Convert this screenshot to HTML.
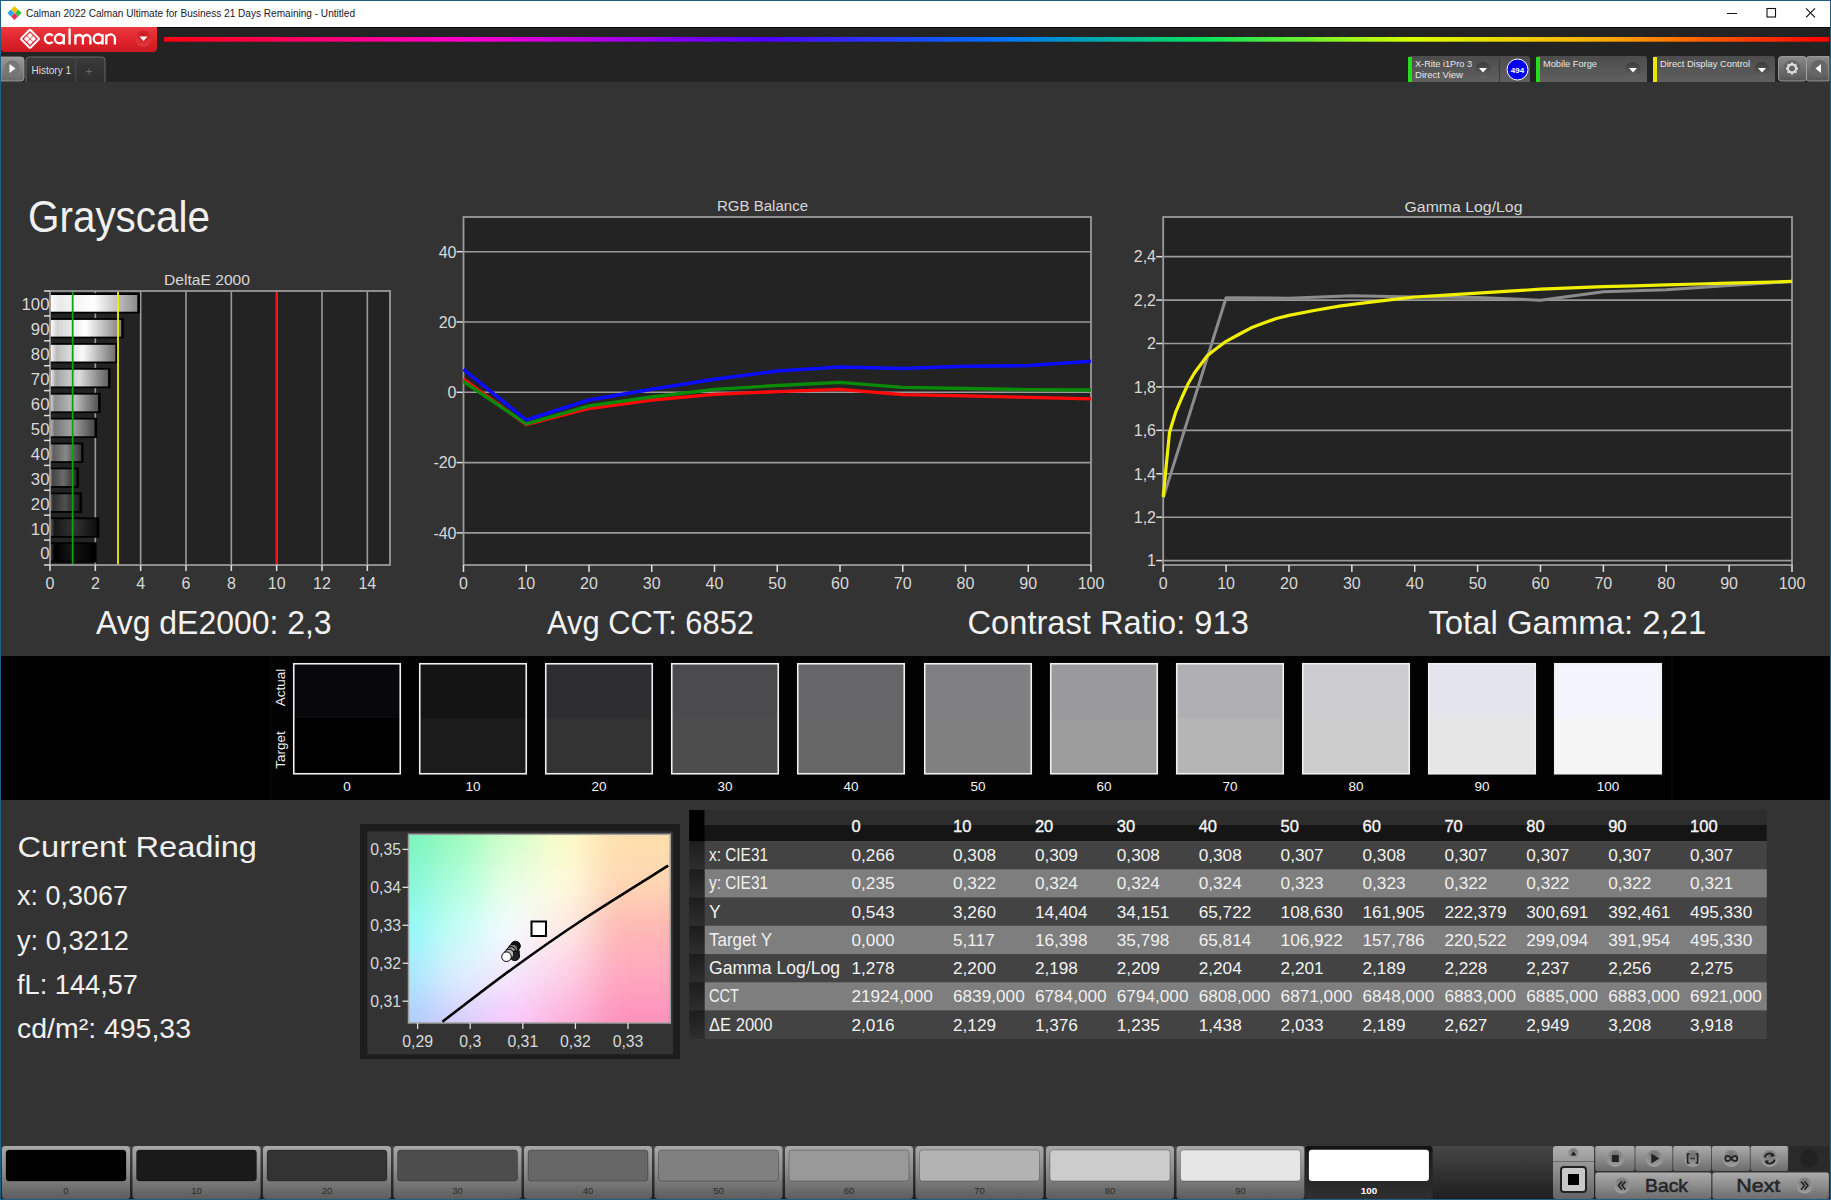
<!DOCTYPE html>
<html><head><meta charset="utf-8"><title>Calman Grayscale</title>
<style>html,body{margin:0;padding:0;background:#333;overflow:hidden;width:1831px;height:1200px}svg{display:block}</style>
</head><body><svg width="1831" height="1200" viewBox="0 0 1831 1200" font-family='"Liberation Sans", sans-serif'><defs><linearGradient id="redg" x1="0" y1="0" x2="0" y2="1"><stop offset="0" stop-color="#ec3a40"/><stop offset="0.5" stop-color="#e0242c"/><stop offset="1" stop-color="#cc1a20"/></linearGradient><radialGradient id="redc" cx="0.5" cy="0.3" r="0.7"><stop offset="0" stop-color="#c8161c"/><stop offset="1" stop-color="#e03a40"/></radialGradient><linearGradient id="rainbow" x1="0" y1="0" x2="1" y2="0"><stop offset="0" stop-color="#ff0010"/><stop offset="0.18" stop-color="#ff00cc"/><stop offset="0.36" stop-color="#5000ff"/><stop offset="0.5" stop-color="#0070ff"/><stop offset="0.62" stop-color="#00e060"/><stop offset="0.75" stop-color="#d8ff00"/><stop offset="0.86" stop-color="#ffb000"/><stop offset="1" stop-color="#ff0000"/></linearGradient><linearGradient id="playg" x1="0" y1="0" x2="0" y2="1"><stop offset="0" stop-color="#9a9a9a"/><stop offset="1" stop-color="#6a6a6a"/></linearGradient><linearGradient id="tabg" x1="0" y1="0" x2="0" y2="1"><stop offset="0" stop-color="#3a3a3a"/><stop offset="1" stop-color="#2e2e2e"/></linearGradient><linearGradient id="combog" x1="0" y1="0" x2="0" y2="1"><stop offset="0" stop-color="#4c4c4c"/><stop offset="1" stop-color="#606060"/></linearGradient><linearGradient id="ddc" x1="0" y1="0" x2="0" y2="1"><stop offset="0" stop-color="#3a3a3a"/><stop offset="1" stop-color="#646464"/></linearGradient><linearGradient id="btng" x1="0" y1="0" x2="0" y2="1"><stop offset="0" stop-color="#8a8a8a"/><stop offset="1" stop-color="#555"/></linearGradient><linearGradient id="bar0" x1="0" y1="0" x2="1" y2="0"><stop offset="0" stop-color="rgb(70,70,70)"/><stop offset="0.1" stop-color="rgb(0,0,0)"/><stop offset="0.5" stop-color="rgb(22,22,22)"/><stop offset="1" stop-color="rgb(0,0,0)"/></linearGradient><linearGradient id="bar1" x1="0" y1="0" x2="1" y2="0"><stop offset="0" stop-color="rgb(96,96,96)"/><stop offset="0.1" stop-color="rgb(23,23,23)"/><stop offset="0.5" stop-color="rgb(51,51,51)"/><stop offset="1" stop-color="rgb(14,14,14)"/></linearGradient><linearGradient id="bar2" x1="0" y1="0" x2="1" y2="0"><stop offset="0" stop-color="rgb(121,121,121)"/><stop offset="0.1" stop-color="rgb(46,46,46)"/><stop offset="0.5" stop-color="rgb(79,79,79)"/><stop offset="1" stop-color="rgb(28,28,28)"/></linearGradient><linearGradient id="bar3" x1="0" y1="0" x2="1" y2="0"><stop offset="0" stop-color="rgb(146,146,146)"/><stop offset="0.1" stop-color="rgb(69,69,69)"/><stop offset="0.5" stop-color="rgb(107,107,107)"/><stop offset="1" stop-color="rgb(41,41,41)"/></linearGradient><linearGradient id="bar4" x1="0" y1="0" x2="1" y2="0"><stop offset="0" stop-color="rgb(172,172,172)"/><stop offset="0.1" stop-color="rgb(93,93,93)"/><stop offset="0.5" stop-color="rgb(136,136,136)"/><stop offset="1" stop-color="rgb(56,56,56)"/></linearGradient><linearGradient id="bar5" x1="0" y1="0" x2="1" y2="0"><stop offset="0" stop-color="rgb(198,198,198)"/><stop offset="0.1" stop-color="rgb(117,117,117)"/><stop offset="0.5" stop-color="rgb(165,165,165)"/><stop offset="1" stop-color="rgb(70,70,70)"/></linearGradient><linearGradient id="bar6" x1="0" y1="0" x2="1" y2="0"><stop offset="0" stop-color="rgb(223,223,223)"/><stop offset="0.1" stop-color="rgb(140,140,140)"/><stop offset="0.5" stop-color="rgb(193,193,193)"/><stop offset="1" stop-color="rgb(84,84,84)"/></linearGradient><linearGradient id="bar7" x1="0" y1="0" x2="1" y2="0"><stop offset="0" stop-color="rgb(248,248,248)"/><stop offset="0.1" stop-color="rgb(163,163,163)"/><stop offset="0.5" stop-color="rgb(221,221,221)"/><stop offset="1" stop-color="rgb(97,97,97)"/></linearGradient><linearGradient id="bar8" x1="0" y1="0" x2="1" y2="0"><stop offset="0" stop-color="rgb(255,255,255)"/><stop offset="0.1" stop-color="rgb(187,187,187)"/><stop offset="0.5" stop-color="rgb(250,250,250)"/><stop offset="1" stop-color="rgb(112,112,112)"/></linearGradient><linearGradient id="bar9" x1="0" y1="0" x2="1" y2="0"><stop offset="0" stop-color="rgb(255,255,255)"/><stop offset="0.1" stop-color="rgb(211,211,211)"/><stop offset="0.5" stop-color="rgb(255,255,255)"/><stop offset="1" stop-color="rgb(126,126,126)"/></linearGradient><linearGradient id="bar10" x1="0" y1="0" x2="1" y2="0"><stop offset="0" stop-color="rgb(255,255,255)"/><stop offset="0.1" stop-color="rgb(234,234,234)"/><stop offset="0.5" stop-color="rgb(255,255,255)"/><stop offset="1" stop-color="rgb(140,140,140)"/></linearGradient><clipPath id="cieclip"><rect x="408.5" y="834.3" width="261.79999999999995" height="188.70000000000005"/></clipPath><filter id="cieblur" x="-20%" y="-20%" width="140%" height="140%"><feGaussianBlur stdDeviation="18"/></filter><linearGradient id="rhg" x1="0" y1="0" x2="0" y2="1"><stop offset="0" stop-color="#1c1c1c"/><stop offset="1" stop-color="#2e2e2e"/></linearGradient><linearGradient id="barbg" x1="0" y1="0" x2="0" y2="1"><stop offset="0" stop-color="#464646"/><stop offset="1" stop-color="#1e1e1e"/></linearGradient><linearGradient id="bbtn" x1="0" y1="0" x2="0" y2="1"><stop offset="0" stop-color="#a8a8a8"/><stop offset="0.5" stop-color="#8a8a8a"/><stop offset="1" stop-color="#5c5c5c"/></linearGradient><linearGradient id="selg" x1="0" y1="0" x2="0" y2="1"><stop offset="0" stop-color="#101010"/><stop offset="0.15" stop-color="#1c1c1c"/><stop offset="1" stop-color="#303030"/></linearGradient><linearGradient id="ctl" x1="0" y1="0" x2="0" y2="1"><stop offset="0" stop-color="#acacac"/><stop offset="1" stop-color="#6c6c6c"/></linearGradient><linearGradient id="ctl2" x1="0" y1="0" x2="0" y2="1"><stop offset="0" stop-color="#b0b0b0"/><stop offset="1" stop-color="#646464"/></linearGradient><radialGradient id="cbtn" cx="0.5" cy="0.3" r="0.75"><stop offset="0" stop-color="#707070"/><stop offset="1" stop-color="#a4a4a4"/></radialGradient></defs><rect x="0" y="0" width="1831" height="1200" fill="#333333"/><rect x="0" y="26" width="1831" height="56" fill="#232323"/><rect x="0" y="0" width="1831" height="27" fill="#ffffff"/><path d="M11.1,9.5 L14.5,6.1 L17.9,9.5 L14.5,12.9 Z" fill="#f5c400"/><path d="M7.4,13 L10.8,9.6 L14.200000000000001,13 L10.8,16.4 Z" fill="#2aa7e8"/><path d="M14.799999999999999,13 L18.2,9.6 L21.599999999999998,13 L18.2,16.4 Z" fill="#38c038"/><path d="M11.1,16.5 L14.5,13.1 L17.9,16.5 L14.5,19.9 Z" fill="#e8305a"/><text x="26" y="17" font-size="11.5" fill="#1a1a28" textLength="329" lengthAdjust="spacingAndGlyphs">Calman 2022 Calman Ultimate for Business 21 Days Remaining  - Untitled</text><line x1="1727" y1="13.5" x2="1737" y2="13.5" stroke="#111" stroke-width="1"/><rect x="1767" y="8.5" width="8.5" height="8.5" fill="none" stroke="#111" stroke-width="1.1"/><path d="M1806,8.3 L1815,17.3 M1815,8.3 L1806,17.3" stroke="#111" stroke-width="1.1"/><path d="M1,27 H157 V48 Q157,52 153,52 H5 Q1,52 1,48 Z" fill="url(#redg)"/><g transform="translate(30,38.8) rotate(45)"><rect x="-6.6" y="-6.6" width="13.2" height="13.2" rx="1" fill="none" stroke="#fff" stroke-width="2"/><rect x="-4.3" y="-4.3" width="4" height="4" fill="#fff"/><rect x="0.3" y="-4.3" width="4" height="4" fill="#fff"/><rect x="-4.3" y="0.3" width="4" height="4" fill="#fff"/><rect x="0.3" y="0.3" width="4" height="4" fill="#fff"/></g><path d="M52.74,35.74 A4.5,4.5 0 1 0 52.74,41.76 M54.9,38.75 A4.5,4.5 0 1 0 63.9,38.75 A4.5,4.5 0 1 0 54.9,38.75 Z M63.75,34.25 V44.4 M69.6,28.4 V44.4 M75.4,44.4 V34.45 M75.4,38.75 A3.75,3.75 0 0 1 82.9,38.75 V44.4 M82.9,38.75 A3.75,3.75 0 0 1 90.4,38.75 V44.4 M93.7,38.75 A4.5,4.5 0 1 0 102.7,38.75 A4.5,4.5 0 1 0 93.7,38.75 Z M102.55,34.25 V44.4 M106.3,44.4 V34.45 M106.3,38.75 A4.3,4.3 0 0 1 114.89999999999999,38.75 V44.4" fill="none" stroke="#fff" stroke-width="2.3"/><circle cx="143.5" cy="38.5" r="8" fill="url(#redc)"/><path d="M139.5,36.5 H147.5 L143.5,41 Z" fill="#fff"/><rect x="164" y="37" width="1665" height="4.7" fill="url(#rainbow)"/><rect x="157" y="27" width="1831" height="1" fill="#080808"/><path d="M1,57 H21 Q24,57 24,60 V78 Q24,81 21,81 H1 Z" fill="url(#playg)" stroke="#aaa" stroke-width="0.8"/><circle cx="12" cy="68.5" r="8" fill="#777"/><path d="M9.5,64 L15.5,68.5 L9.5,73 Z" fill="#fff"/><path d="M26,82 V60 Q26,57 29,57 H102 Q105,57 105,60 V82" fill="url(#tabg)" stroke="#686868" stroke-width="1"/><line x1="75.7" y1="57" x2="75.7" y2="82" stroke="#4a4a4a" stroke-width="1"/><circle cx="89" cy="71" r="6.5" fill="#333"/><path d="M86,71.5 H92 M89,68.5 V74.5" stroke="#666" stroke-width="1"/><text x="31.5" y="74" font-size="10.5" fill="#dcdcdc" textLength="39.5" lengthAdjust="spacingAndGlyphs">History 1</text><path d="M1408,82 V59 Q1408,56 1411,56 H1527 Q1530,56 1530,59 V82 Z" fill="url(#combog)"/><rect x="1408" y="57" width="4" height="25" fill="#22dd22"/><text x="1415" y="66.5" font-size="9.8" fill="#e8e8e8" textLength="57" lengthAdjust="spacingAndGlyphs">X-Rite i1Pro 3</text><text x="1415" y="78.0" font-size="9.8" fill="#e8e8e8" textLength="48" lengthAdjust="spacingAndGlyphs">Direct View</text><circle cx="1483" cy="70" r="8.5" fill="url(#ddc)" stroke="#5e5e5e" stroke-width="0.6"/><path d="M1479,68 H1487 L1483,72.5 Z" fill="#fff"/><line x1="1499.5" y1="57" x2="1499.5" y2="82" stroke="#3e3e3e" stroke-width="1.2"/><circle cx="1517.5" cy="69.5" r="10.5" fill="#0000ee" stroke="#fff" stroke-width="1"/><text x="1517.5" y="72.5" font-size="8" fill="#fff" text-anchor="middle" font-weight="bold">494</text><path d="M1536,82 V59 Q1536,56 1539,56 H1644 Q1647,56 1647,59 V82 Z" fill="url(#combog)"/><rect x="1536" y="57" width="4" height="25" fill="#22dd22"/><text x="1543" y="66.5" font-size="9.8" fill="#e8e8e8" textLength="54" lengthAdjust="spacingAndGlyphs">Mobile Forge</text><circle cx="1633" cy="70" r="8.5" fill="url(#ddc)" stroke="#5e5e5e" stroke-width="0.6"/><path d="M1629,68 H1637 L1633,72.5 Z" fill="#fff"/><path d="M1653,82 V59 Q1653,56 1656,56 H1772 Q1775,56 1775,59 V82 Z" fill="url(#combog)"/><rect x="1653" y="57" width="4" height="25" fill="#e8e800"/><text x="1660" y="66.5" font-size="9.8" fill="#e8e8e8" textLength="90" lengthAdjust="spacingAndGlyphs">Direct Display Control</text><circle cx="1762" cy="70" r="8.5" fill="url(#ddc)" stroke="#5e5e5e" stroke-width="0.6"/><path d="M1758,68 H1766 L1762,72.5 Z" fill="#fff"/><rect x="1778.5" y="56.5" width="28" height="24.5" rx="3" fill="url(#btng)" stroke="#aaa" stroke-width="0.8"/><circle cx="1792" cy="68.5" r="8.5" fill="#666"/><g transform="translate(1792,68.5)"><rect x="-1.2" y="-6" width="2.4" height="3" fill="#ddd" transform="rotate(0)"/><rect x="-1.2" y="-6" width="2.4" height="3" fill="#ddd" transform="rotate(45)"/><rect x="-1.2" y="-6" width="2.4" height="3" fill="#ddd" transform="rotate(90)"/><rect x="-1.2" y="-6" width="2.4" height="3" fill="#ddd" transform="rotate(135)"/><rect x="-1.2" y="-6" width="2.4" height="3" fill="#ddd" transform="rotate(180)"/><rect x="-1.2" y="-6" width="2.4" height="3" fill="#ddd" transform="rotate(225)"/><rect x="-1.2" y="-6" width="2.4" height="3" fill="#ddd" transform="rotate(270)"/><rect x="-1.2" y="-6" width="2.4" height="3" fill="#ddd" transform="rotate(315)"/><circle r="4" fill="none" stroke="#ddd" stroke-width="2"/></g><path d="M1808.5,56.5 H1829 V81 H1808.5 Q1806.5,81 1806.5,78 V59 Q1806.5,56.5 1808.5,56.5 Z" fill="url(#btng)" stroke="#aaa" stroke-width="0.8"/><circle cx="1819" cy="68.5" r="8.5" fill="#666"/><path d="M1821,64 L1815.5,68.5 L1821,73 Z" fill="#fff"/><text x="28" y="231.5" font-size="44" fill="#f0f0f0" textLength="182" lengthAdjust="spacingAndGlyphs">Grayscale</text><rect x="50" y="291" width="340" height="274" fill="#232323"/><text x="207" y="285" font-size="15.5" fill="#d8d8d8" text-anchor="middle" textLength="86" lengthAdjust="spacingAndGlyphs">DeltaE 2000</text><line x1="95.33333333333334" y1="291" x2="95.33333333333334" y2="565" stroke="#9a9a9a" stroke-width="1.6"/><line x1="140.66666666666669" y1="291" x2="140.66666666666669" y2="565" stroke="#9a9a9a" stroke-width="1.6"/><line x1="186.0" y1="291" x2="186.0" y2="565" stroke="#9a9a9a" stroke-width="1.6"/><line x1="231.33333333333334" y1="291" x2="231.33333333333334" y2="565" stroke="#9a9a9a" stroke-width="1.6"/><line x1="276.6666666666667" y1="291" x2="276.6666666666667" y2="565" stroke="#9a9a9a" stroke-width="1.6"/><line x1="322.0" y1="291" x2="322.0" y2="565" stroke="#9a9a9a" stroke-width="1.6"/><line x1="367.33333333333337" y1="291" x2="367.33333333333337" y2="565" stroke="#9a9a9a" stroke-width="1.6"/><rect x="50" y="542.2909090909092" width="46.696" height="20.309090909090912" fill="#000"/><rect x="50" y="544.0909090909091" width="44.196" height="16.70909090909091" fill="url(#bar0)"/><rect x="50" y="517.3818181818183" width="49.257333333333335" height="20.309090909090912" fill="#000"/><rect x="50" y="519.1818181818182" width="46.757333333333335" height="16.70909090909091" fill="url(#bar1)"/><rect x="50" y="492.47272727272724" width="32.18933333333334" height="20.309090909090912" fill="#000"/><rect x="50" y="494.27272727272725" width="29.689333333333337" height="16.70909090909091" fill="url(#bar2)"/><rect x="50" y="467.56363636363636" width="28.99333333333334" height="20.309090909090912" fill="#000"/><rect x="50" y="469.3636363636364" width="26.49333333333334" height="16.70909090909091" fill="url(#bar3)"/><rect x="50" y="442.6545454545455" width="33.59466666666667" height="20.309090909090912" fill="#000"/><rect x="50" y="444.4545454545455" width="31.09466666666667" height="16.70909090909091" fill="url(#bar4)"/><rect x="50" y="417.74545454545455" width="47.08133333333333" height="20.309090909090912" fill="#000"/><rect x="50" y="419.54545454545456" width="44.58133333333333" height="16.70909090909091" fill="url(#bar5)"/><rect x="50" y="392.8363636363636" width="50.617333333333335" height="20.309090909090912" fill="#000"/><rect x="50" y="394.6363636363636" width="48.117333333333335" height="16.70909090909091" fill="url(#bar6)"/><rect x="50" y="367.92727272727274" width="60.54533333333333" height="20.309090909090912" fill="#000"/><rect x="50" y="369.72727272727275" width="58.04533333333333" height="16.70909090909091" fill="url(#bar7)"/><rect x="50" y="343.0181818181818" width="67.844" height="20.309090909090912" fill="#000"/><rect x="50" y="344.8181818181818" width="65.344" height="16.70909090909091" fill="url(#bar8)"/><rect x="50" y="318.1090909090909" width="73.71466666666667" height="20.309090909090912" fill="#000"/><rect x="50" y="319.90909090909093" width="71.21466666666667" height="16.70909090909091" fill="url(#bar9)"/><rect x="50" y="293.2" width="89.80799999999999" height="20.309090909090912" fill="#000"/><rect x="50" y="295.0" width="87.30799999999999" height="16.70909090909091" fill="url(#bar10)"/><line x1="72.66666666666667" y1="291" x2="72.66666666666667" y2="565" stroke="#10a010" stroke-width="1.8"/><line x1="118.0" y1="291" x2="118.0" y2="565" stroke="#f0f000" stroke-width="1.8"/><line x1="276.6666666666667" y1="291" x2="276.6666666666667" y2="565" stroke="#ff1010" stroke-width="2"/><rect x="50" y="291" width="340" height="274" fill="none" stroke="#9a9a9a" stroke-width="1.8"/><line x1="44" y1="291.0" x2="50" y2="291.0" stroke="#e0e0e0" stroke-width="1.5"/><line x1="44" y1="315.90909090909093" x2="50" y2="315.90909090909093" stroke="#e0e0e0" stroke-width="1.5"/><line x1="44" y1="340.8181818181818" x2="50" y2="340.8181818181818" stroke="#e0e0e0" stroke-width="1.5"/><line x1="44" y1="365.72727272727275" x2="50" y2="365.72727272727275" stroke="#e0e0e0" stroke-width="1.5"/><line x1="44" y1="390.6363636363636" x2="50" y2="390.6363636363636" stroke="#e0e0e0" stroke-width="1.5"/><line x1="44" y1="415.54545454545456" x2="50" y2="415.54545454545456" stroke="#e0e0e0" stroke-width="1.5"/><line x1="44" y1="440.4545454545455" x2="50" y2="440.4545454545455" stroke="#e0e0e0" stroke-width="1.5"/><line x1="44" y1="465.3636363636364" x2="50" y2="465.3636363636364" stroke="#e0e0e0" stroke-width="1.5"/><line x1="44" y1="490.27272727272725" x2="50" y2="490.27272727272725" stroke="#e0e0e0" stroke-width="1.5"/><line x1="44" y1="515.1818181818182" x2="50" y2="515.1818181818182" stroke="#e0e0e0" stroke-width="1.5"/><line x1="44" y1="540.0909090909091" x2="50" y2="540.0909090909091" stroke="#e0e0e0" stroke-width="1.5"/><line x1="44" y1="565.0" x2="50" y2="565.0" stroke="#e0e0e0" stroke-width="1.5"/><text x="49.5" y="559.4454545454546" font-size="16.8" fill="#d8d8d8" text-anchor="end">0</text><text x="49.5" y="534.5363636363637" font-size="16.8" fill="#d8d8d8" text-anchor="end">10</text><text x="49.5" y="509.62727272727267" font-size="16.8" fill="#d8d8d8" text-anchor="end">20</text><text x="49.5" y="484.7181818181818" font-size="16.8" fill="#d8d8d8" text-anchor="end">30</text><text x="49.5" y="459.8090909090909" font-size="16.8" fill="#d8d8d8" text-anchor="end">40</text><text x="49.5" y="434.9" font-size="16.8" fill="#d8d8d8" text-anchor="end">50</text><text x="49.5" y="409.99090909090904" font-size="16.8" fill="#d8d8d8" text-anchor="end">60</text><text x="49.5" y="385.08181818181816" font-size="16.8" fill="#d8d8d8" text-anchor="end">70</text><text x="49.5" y="360.17272727272723" font-size="16.8" fill="#d8d8d8" text-anchor="end">80</text><text x="49.5" y="335.26363636363635" font-size="16.8" fill="#d8d8d8" text-anchor="end">90</text><text x="49.5" y="310.3545454545454" font-size="16.8" fill="#d8d8d8" text-anchor="end">100</text><line x1="50.0" y1="565" x2="50.0" y2="571" stroke="#e0e0e0" stroke-width="1.5"/><text x="50.0" y="588.5" font-size="16" fill="#d8d8d8" text-anchor="middle">0</text><line x1="95.33333333333334" y1="565" x2="95.33333333333334" y2="571" stroke="#e0e0e0" stroke-width="1.5"/><text x="95.33333333333334" y="588.5" font-size="16" fill="#d8d8d8" text-anchor="middle">2</text><line x1="140.66666666666669" y1="565" x2="140.66666666666669" y2="571" stroke="#e0e0e0" stroke-width="1.5"/><text x="140.66666666666669" y="588.5" font-size="16" fill="#d8d8d8" text-anchor="middle">4</text><line x1="186.0" y1="565" x2="186.0" y2="571" stroke="#e0e0e0" stroke-width="1.5"/><text x="186.0" y="588.5" font-size="16" fill="#d8d8d8" text-anchor="middle">6</text><line x1="231.33333333333334" y1="565" x2="231.33333333333334" y2="571" stroke="#e0e0e0" stroke-width="1.5"/><text x="231.33333333333334" y="588.5" font-size="16" fill="#d8d8d8" text-anchor="middle">8</text><line x1="276.6666666666667" y1="565" x2="276.6666666666667" y2="571" stroke="#e0e0e0" stroke-width="1.5"/><text x="276.6666666666667" y="588.5" font-size="16" fill="#d8d8d8" text-anchor="middle">10</text><line x1="322.0" y1="565" x2="322.0" y2="571" stroke="#e0e0e0" stroke-width="1.5"/><text x="322.0" y="588.5" font-size="16" fill="#d8d8d8" text-anchor="middle">12</text><line x1="367.33333333333337" y1="565" x2="367.33333333333337" y2="571" stroke="#e0e0e0" stroke-width="1.5"/><text x="367.33333333333337" y="588.5" font-size="16" fill="#d8d8d8" text-anchor="middle">14</text><rect x="463.5" y="217" width="627.5" height="348" fill="#232323"/><text x="762.5" y="211" font-size="15.5" fill="#d8d8d8" text-anchor="middle" textLength="91" lengthAdjust="spacingAndGlyphs">RGB Balance</text><line x1="463.5" y1="251.70000000000002" x2="1091" y2="251.70000000000002" stroke="#9a9a9a" stroke-width="1.6"/><line x1="456.5" y1="251.70000000000002" x2="463.5" y2="251.70000000000002" stroke="#e0e0e0" stroke-width="1.5"/><text x="456.5" y="257.5" font-size="16" fill="#d8d8d8" text-anchor="end">40</text><line x1="463.5" y1="322.0" x2="1091" y2="322.0" stroke="#9a9a9a" stroke-width="1.6"/><line x1="456.5" y1="322.0" x2="463.5" y2="322.0" stroke="#e0e0e0" stroke-width="1.5"/><text x="456.5" y="327.8" font-size="16" fill="#d8d8d8" text-anchor="end">20</text><line x1="463.5" y1="392.3" x2="1091" y2="392.3" stroke="#9a9a9a" stroke-width="1.6"/><line x1="456.5" y1="392.3" x2="463.5" y2="392.3" stroke="#e0e0e0" stroke-width="1.5"/><text x="456.5" y="398.1" font-size="16" fill="#d8d8d8" text-anchor="end">0</text><line x1="463.5" y1="462.6" x2="1091" y2="462.6" stroke="#9a9a9a" stroke-width="1.6"/><line x1="456.5" y1="462.6" x2="463.5" y2="462.6" stroke="#e0e0e0" stroke-width="1.5"/><text x="456.5" y="468.40000000000003" font-size="16" fill="#d8d8d8" text-anchor="end">-20</text><line x1="463.5" y1="532.9" x2="1091" y2="532.9" stroke="#9a9a9a" stroke-width="1.6"/><line x1="456.5" y1="532.9" x2="463.5" y2="532.9" stroke="#e0e0e0" stroke-width="1.5"/><text x="456.5" y="538.6999999999999" font-size="16" fill="#d8d8d8" text-anchor="end">-40</text><rect x="463.5" y="217" width="627.5" height="348" fill="none" stroke="#9a9a9a" stroke-width="1.8"/><line x1="463.5" y1="565" x2="463.5" y2="572" stroke="#e0e0e0" stroke-width="1.5"/><text x="463.5" y="588.7" font-size="16" fill="#d8d8d8" text-anchor="middle">0</text><line x1="526.25" y1="565" x2="526.25" y2="572" stroke="#e0e0e0" stroke-width="1.5"/><text x="526.25" y="588.7" font-size="16" fill="#d8d8d8" text-anchor="middle">10</text><line x1="589.0" y1="565" x2="589.0" y2="572" stroke="#e0e0e0" stroke-width="1.5"/><text x="589.0" y="588.7" font-size="16" fill="#d8d8d8" text-anchor="middle">20</text><line x1="651.75" y1="565" x2="651.75" y2="572" stroke="#e0e0e0" stroke-width="1.5"/><text x="651.75" y="588.7" font-size="16" fill="#d8d8d8" text-anchor="middle">30</text><line x1="714.5" y1="565" x2="714.5" y2="572" stroke="#e0e0e0" stroke-width="1.5"/><text x="714.5" y="588.7" font-size="16" fill="#d8d8d8" text-anchor="middle">40</text><line x1="777.25" y1="565" x2="777.25" y2="572" stroke="#e0e0e0" stroke-width="1.5"/><text x="777.25" y="588.7" font-size="16" fill="#d8d8d8" text-anchor="middle">50</text><line x1="840.0" y1="565" x2="840.0" y2="572" stroke="#e0e0e0" stroke-width="1.5"/><text x="840.0" y="588.7" font-size="16" fill="#d8d8d8" text-anchor="middle">60</text><line x1="902.75" y1="565" x2="902.75" y2="572" stroke="#e0e0e0" stroke-width="1.5"/><text x="902.75" y="588.7" font-size="16" fill="#d8d8d8" text-anchor="middle">70</text><line x1="965.5" y1="565" x2="965.5" y2="572" stroke="#e0e0e0" stroke-width="1.5"/><text x="965.5" y="588.7" font-size="16" fill="#d8d8d8" text-anchor="middle">80</text><line x1="1028.25" y1="565" x2="1028.25" y2="572" stroke="#e0e0e0" stroke-width="1.5"/><text x="1028.25" y="588.7" font-size="16" fill="#d8d8d8" text-anchor="middle">90</text><line x1="1091.0" y1="565" x2="1091.0" y2="572" stroke="#e0e0e0" stroke-width="1.5"/><text x="1091.0" y="588.7" font-size="16" fill="#d8d8d8" text-anchor="middle">100</text><polyline points="463.5,379.0 526.2,424.6 589.0,408.5 651.8,400.0 714.5,394.3 777.2,391.6 840.0,389.3 902.8,394.7 965.5,395.8 1028.2,397.4 1091.0,398.9" fill="none" stroke="#ff0a0a" stroke-width="3.3" stroke-linejoin="round"/><polyline points="463.5,381.6 526.2,423.8 589.0,405.8 651.8,397.0 714.5,389.3 777.2,385.5 840.0,382.4 902.8,387.4 965.5,388.5 1028.2,389.7 1091.0,390.0" fill="none" stroke="#088c08" stroke-width="3.3" stroke-linejoin="round"/><polyline points="463.5,369.4 526.2,420.0 589.0,400.0 651.8,389.3 714.5,379.3 777.2,371.0 840.0,367.0 902.8,368.6 965.5,366.3 1028.2,365.5 1091.0,361.3" fill="none" stroke="#0c0cff" stroke-width="3.5" stroke-linejoin="round"/><rect x="1163.2" y="217" width="628.8" height="348" fill="#232323"/><text x="1463.5" y="211.5" font-size="15.5" fill="#d8d8d8" text-anchor="middle" textLength="118" lengthAdjust="spacingAndGlyphs">Gamma Log/Log</text><line x1="1163.2" y1="560.6" x2="1792" y2="560.6" stroke="#9a9a9a" stroke-width="1.6"/><line x1="1156.2" y1="560.6" x2="1163.2" y2="560.6" stroke="#e0e0e0" stroke-width="1.5"/><text x="1156" y="566.4" font-size="16" fill="#d8d8d8" text-anchor="end">1</text><line x1="1163.2" y1="517.1800000000001" x2="1792" y2="517.1800000000001" stroke="#9a9a9a" stroke-width="1.6"/><line x1="1156.2" y1="517.1800000000001" x2="1163.2" y2="517.1800000000001" stroke="#e0e0e0" stroke-width="1.5"/><text x="1156" y="522.98" font-size="16" fill="#d8d8d8" text-anchor="end">1,2</text><line x1="1163.2" y1="473.76000000000005" x2="1792" y2="473.76000000000005" stroke="#9a9a9a" stroke-width="1.6"/><line x1="1156.2" y1="473.76000000000005" x2="1163.2" y2="473.76000000000005" stroke="#e0e0e0" stroke-width="1.5"/><text x="1156" y="479.56000000000006" font-size="16" fill="#d8d8d8" text-anchor="end">1,4</text><line x1="1163.2" y1="430.34000000000003" x2="1792" y2="430.34000000000003" stroke="#9a9a9a" stroke-width="1.6"/><line x1="1156.2" y1="430.34000000000003" x2="1163.2" y2="430.34000000000003" stroke="#e0e0e0" stroke-width="1.5"/><text x="1156" y="436.14000000000004" font-size="16" fill="#d8d8d8" text-anchor="end">1,6</text><line x1="1163.2" y1="386.92" x2="1792" y2="386.92" stroke="#9a9a9a" stroke-width="1.6"/><line x1="1156.2" y1="386.92" x2="1163.2" y2="386.92" stroke="#e0e0e0" stroke-width="1.5"/><text x="1156" y="392.72" font-size="16" fill="#d8d8d8" text-anchor="end">1,8</text><line x1="1163.2" y1="343.5" x2="1792" y2="343.5" stroke="#9a9a9a" stroke-width="1.6"/><line x1="1156.2" y1="343.5" x2="1163.2" y2="343.5" stroke="#e0e0e0" stroke-width="1.5"/><text x="1156" y="349.3" font-size="16" fill="#d8d8d8" text-anchor="end">2</text><line x1="1163.2" y1="300.08" x2="1792" y2="300.08" stroke="#9a9a9a" stroke-width="1.6"/><line x1="1156.2" y1="300.08" x2="1163.2" y2="300.08" stroke="#e0e0e0" stroke-width="1.5"/><text x="1156" y="305.88" font-size="16" fill="#d8d8d8" text-anchor="end">2,2</text><line x1="1163.2" y1="256.65999999999997" x2="1792" y2="256.65999999999997" stroke="#9a9a9a" stroke-width="1.6"/><line x1="1156.2" y1="256.65999999999997" x2="1163.2" y2="256.65999999999997" stroke="#e0e0e0" stroke-width="1.5"/><text x="1156" y="262.46" font-size="16" fill="#d8d8d8" text-anchor="end">2,4</text><rect x="1163.2" y="217" width="628.8" height="348" fill="none" stroke="#9a9a9a" stroke-width="1.8"/><line x1="1163.2" y1="565" x2="1163.2" y2="572" stroke="#e0e0e0" stroke-width="1.5"/><text x="1163.2" y="588.5" font-size="16" fill="#d8d8d8" text-anchor="middle">0</text><line x1="1226.08" y1="565" x2="1226.08" y2="572" stroke="#e0e0e0" stroke-width="1.5"/><text x="1226.08" y="588.5" font-size="16" fill="#d8d8d8" text-anchor="middle">10</text><line x1="1288.96" y1="565" x2="1288.96" y2="572" stroke="#e0e0e0" stroke-width="1.5"/><text x="1288.96" y="588.5" font-size="16" fill="#d8d8d8" text-anchor="middle">20</text><line x1="1351.8400000000001" y1="565" x2="1351.8400000000001" y2="572" stroke="#e0e0e0" stroke-width="1.5"/><text x="1351.8400000000001" y="588.5" font-size="16" fill="#d8d8d8" text-anchor="middle">30</text><line x1="1414.72" y1="565" x2="1414.72" y2="572" stroke="#e0e0e0" stroke-width="1.5"/><text x="1414.72" y="588.5" font-size="16" fill="#d8d8d8" text-anchor="middle">40</text><line x1="1477.6" y1="565" x2="1477.6" y2="572" stroke="#e0e0e0" stroke-width="1.5"/><text x="1477.6" y="588.5" font-size="16" fill="#d8d8d8" text-anchor="middle">50</text><line x1="1540.48" y1="565" x2="1540.48" y2="572" stroke="#e0e0e0" stroke-width="1.5"/><text x="1540.48" y="588.5" font-size="16" fill="#d8d8d8" text-anchor="middle">60</text><line x1="1603.3600000000001" y1="565" x2="1603.3600000000001" y2="572" stroke="#e0e0e0" stroke-width="1.5"/><text x="1603.3600000000001" y="588.5" font-size="16" fill="#d8d8d8" text-anchor="middle">70</text><line x1="1666.24" y1="565" x2="1666.24" y2="572" stroke="#e0e0e0" stroke-width="1.5"/><text x="1666.24" y="588.5" font-size="16" fill="#d8d8d8" text-anchor="middle">80</text><line x1="1729.12" y1="565" x2="1729.12" y2="572" stroke="#e0e0e0" stroke-width="1.5"/><text x="1729.12" y="588.5" font-size="16" fill="#d8d8d8" text-anchor="middle">90</text><line x1="1792.0" y1="565" x2="1792.0" y2="572" stroke="#e0e0e0" stroke-width="1.5"/><text x="1792.0" y="588.5" font-size="16" fill="#d8d8d8" text-anchor="middle">100</text><polyline points="1163.2,497.9 1226.1,297.8 1289.0,298.2 1351.8,295.8 1414.7,296.9 1477.6,297.6 1540.5,300.2 1603.4,291.7 1666.2,289.7 1729.1,285.6 1792.0,281.5" fill="none" stroke="#8c8c8c" stroke-width="3" stroke-linejoin="round"/><polyline points="1163.2,497.0 1166.3,464.8 1169.5,432.5 1172.6,422.2 1175.8,411.9 1182.1,397.0 1188.4,383.2 1194.6,372.7 1200.9,364.3 1207.2,355.8 1213.5,350.8 1219.8,346.0 1226.1,341.3 1238.7,334.5 1251.2,327.8 1263.8,323.0 1276.4,318.5 1289.0,315.4 1314.1,310.5 1339.3,306.2 1364.4,302.8 1389.6,299.9 1414.7,297.0 1446.2,295.1 1477.6,293.1 1509.0,291.2 1540.5,289.2 1571.9,287.9 1603.4,286.6 1634.8,285.8 1666.2,284.9 1697.7,284.0 1729.1,283.1 1760.6,282.3 1792.0,281.4" fill="none" stroke="#f0f000" stroke-width="3.2" stroke-linejoin="round"/><text x="96" y="634" font-size="34" fill="#f2f2f2" textLength="235.6" lengthAdjust="spacingAndGlyphs">Avg dE2000: 2,3</text><text x="547" y="634" font-size="34" fill="#f2f2f2" textLength="207" lengthAdjust="spacingAndGlyphs">Avg CCT: 6852</text><text x="967.5" y="634" font-size="34" fill="#f2f2f2" textLength="281.3" lengthAdjust="spacingAndGlyphs">Contrast Ratio: 913</text><text x="1428.4" y="634" font-size="34" fill="#f2f2f2" textLength="277.8" lengthAdjust="spacingAndGlyphs">Total Gamma: 2,21</text><rect x="0" y="656" width="1831" height="144" fill="#000000"/><rect x="270.5" y="656" width="1401.5" height="144" fill="#020202"/><line x1="270.5" y1="656" x2="270.5" y2="800" stroke="#0a0a0a" stroke-width="1"/><line x1="1672" y1="656" x2="1672" y2="800" stroke="#0a0a0a" stroke-width="1"/><rect x="293" y="663" width="108" height="55" fill="#07070c"/><rect x="293" y="718" width="108" height="56" fill="#000000"/><rect x="293.75" y="663.75" width="106.5" height="110" fill="none" stroke="#f0f0f0" stroke-width="1.6"/><text x="347" y="790.5" font-size="13.5" fill="#f4f4f4" text-anchor="middle">0</text><rect x="419" y="663" width="108" height="55" fill="#141414"/><rect x="419" y="718" width="108" height="56" fill="#1b1b1b"/><rect x="419.75" y="663.75" width="106.5" height="110" fill="none" stroke="#f0f0f0" stroke-width="1.6"/><text x="473" y="790.5" font-size="13.5" fill="#f4f4f4" text-anchor="middle">10</text><rect x="545" y="663" width="108" height="55" fill="#2e2e30"/><rect x="545" y="718" width="108" height="56" fill="#333333"/><rect x="545.75" y="663.75" width="106.5" height="110" fill="none" stroke="#f0f0f0" stroke-width="1.6"/><text x="599" y="790.5" font-size="13.5" fill="#f4f4f4" text-anchor="middle">20</text><rect x="671" y="663" width="108" height="55" fill="#4b4b4d"/><rect x="671" y="718" width="108" height="56" fill="#4d4d4d"/><rect x="671.75" y="663.75" width="106.5" height="110" fill="none" stroke="#f0f0f0" stroke-width="1.6"/><text x="725" y="790.5" font-size="13.5" fill="#f4f4f4" text-anchor="middle">30</text><rect x="797" y="663" width="108" height="55" fill="#666668"/><rect x="797" y="718" width="108" height="56" fill="#666666"/><rect x="797.75" y="663.75" width="106.5" height="110" fill="none" stroke="#f0f0f0" stroke-width="1.6"/><text x="851" y="790.5" font-size="13.5" fill="#f4f4f4" text-anchor="middle">40</text><rect x="924" y="663" width="108" height="55" fill="#808083"/><rect x="924" y="718" width="108" height="56" fill="#808080"/><rect x="924.75" y="663.75" width="106.5" height="110" fill="none" stroke="#f0f0f0" stroke-width="1.6"/><text x="978" y="790.5" font-size="13.5" fill="#f4f4f4" text-anchor="middle">50</text><rect x="1050" y="663" width="108" height="55" fill="#9a9a9e"/><rect x="1050" y="718" width="108" height="56" fill="#9c9c9c"/><rect x="1050.75" y="663.75" width="106.5" height="110" fill="none" stroke="#f0f0f0" stroke-width="1.6"/><text x="1104" y="790.5" font-size="13.5" fill="#f4f4f4" text-anchor="middle">60</text><rect x="1176" y="663" width="108" height="55" fill="#b0b0b4"/><rect x="1176" y="718" width="108" height="56" fill="#b4b4b4"/><rect x="1176.75" y="663.75" width="106.5" height="110" fill="none" stroke="#f0f0f0" stroke-width="1.6"/><text x="1230" y="790.5" font-size="13.5" fill="#f4f4f4" text-anchor="middle">70</text><rect x="1302" y="663" width="108" height="55" fill="#cbcbd0"/><rect x="1302" y="718" width="108" height="56" fill="#cdcdcd"/><rect x="1302.75" y="663.75" width="106.5" height="110" fill="none" stroke="#f0f0f0" stroke-width="1.6"/><text x="1356" y="790.5" font-size="13.5" fill="#f4f4f4" text-anchor="middle">80</text><rect x="1428" y="663" width="108" height="55" fill="#e4e4ec"/><rect x="1428" y="718" width="108" height="56" fill="#e6e6e6"/><rect x="1428.75" y="663.75" width="106.5" height="110" fill="none" stroke="#f0f0f0" stroke-width="1.6"/><text x="1482" y="790.5" font-size="13.5" fill="#f4f4f4" text-anchor="middle">90</text><rect x="1554" y="663" width="108" height="55" fill="#f4f4fc"/><rect x="1554" y="718" width="108" height="56" fill="#f5f5f5"/><rect x="1554.75" y="663.75" width="106.5" height="110" fill="none" stroke="#f0f0f0" stroke-width="1.6"/><text x="1608" y="790.5" font-size="13.5" fill="#f4f4f4" text-anchor="middle">100</text><text transform="translate(284.5,687.5) rotate(-90)" font-size="13.5" fill="#f0f0f0" text-anchor="middle">Actual</text><text transform="translate(284.5,750) rotate(-90)" font-size="13.5" fill="#f0f0f0" text-anchor="middle">Target</text><text x="17.5" y="857" font-size="30" fill="#f0f0f0" textLength="239.5" lengthAdjust="spacingAndGlyphs">Current Reading</text><text x="17" y="905" font-size="27.5" fill="#f0f0f0" textLength="111" lengthAdjust="spacingAndGlyphs">x: 0,3067</text><text x="17" y="950" font-size="27.5" fill="#f0f0f0" textLength="112" lengthAdjust="spacingAndGlyphs">y: 0,3212</text><text x="17" y="994" font-size="27.5" fill="#f0f0f0" textLength="121" lengthAdjust="spacingAndGlyphs">fL: 144,57</text><text x="17" y="1038" font-size="27.5" fill="#f0f0f0" textLength="174" lengthAdjust="spacingAndGlyphs">cd/m²: 495,33</text><rect x="360" y="824" width="320" height="235" fill="#1d1d1d"/><rect x="367.3" y="831.3" width="305.7" height="223" fill="#333333"/><g clip-path="url(#cieclip)"><g filter="url(#cieblur)"><rect x="322.3" y="750.7" width="112.4" height="107.2" fill="#78f4bc"/><rect x="434.7" y="750.7" width="52.4" height="107.2" fill="#9cfcbc"/><rect x="487.0" y="750.7" width="52.4" height="107.2" fill="#d0ffc8"/><rect x="539.4" y="750.7" width="52.4" height="107.2" fill="#fefcc8"/><rect x="591.8" y="750.7" width="112.4" height="107.2" fill="#ffe0ac"/><rect x="322.3" y="857.9" width="112.4" height="47.2" fill="#84f8d8"/><rect x="434.7" y="857.9" width="52.4" height="47.2" fill="#b0ffdc"/><rect x="487.0" y="857.9" width="52.4" height="47.2" fill="#eaffe4"/><rect x="539.4" y="857.9" width="52.4" height="47.2" fill="#fffcdc"/><rect x="591.8" y="857.9" width="112.4" height="47.2" fill="#ffd8b4"/><rect x="322.3" y="905.1" width="112.4" height="47.2" fill="#90fcf8"/><rect x="434.7" y="905.1" width="52.4" height="47.2" fill="#c8fff8"/><rect x="487.0" y="905.1" width="52.4" height="47.2" fill="#f8fcff"/><rect x="539.4" y="905.1" width="52.4" height="47.2" fill="#ffece6"/><rect x="591.8" y="905.1" width="112.4" height="47.2" fill="#ffb8b4"/><rect x="322.3" y="952.2" width="112.4" height="47.2" fill="#a8e8ff"/><rect x="434.7" y="952.2" width="52.4" height="47.2" fill="#e0f0ff"/><rect x="487.0" y="952.2" width="52.4" height="47.2" fill="#f6e6ff"/><rect x="539.4" y="952.2" width="52.4" height="47.2" fill="#ffd0e8"/><rect x="591.8" y="952.2" width="112.4" height="47.2" fill="#ffa8c0"/><rect x="322.3" y="999.4" width="112.4" height="107.2" fill="#b0ccff"/><rect x="434.7" y="999.4" width="52.4" height="107.2" fill="#d8ccff"/><rect x="487.0" y="999.4" width="52.4" height="107.2" fill="#fcc8fc"/><rect x="539.4" y="999.4" width="52.4" height="107.2" fill="#ffb0dc"/><rect x="591.8" y="999.4" width="112.4" height="107.2" fill="#ff90bc"/></g></g><rect x="408.5" y="834.3" width="261.79999999999995" height="188.70000000000005" fill="none" stroke="#a0a0a0" stroke-width="1.5"/><line x1="402.5" y1="849.4000000000001" x2="408.5" y2="849.4000000000001" stroke="#e0e0e0" stroke-width="1.3"/><text x="401" y="855.4000000000001" font-size="15.8" fill="#d8d8d8" text-anchor="end">0,35</text><line x1="402.5" y1="887.3499999999999" x2="408.5" y2="887.3499999999999" stroke="#e0e0e0" stroke-width="1.3"/><text x="401" y="893.3499999999999" font-size="15.8" fill="#d8d8d8" text-anchor="end">0,34</text><line x1="402.5" y1="925.3" x2="408.5" y2="925.3" stroke="#e0e0e0" stroke-width="1.3"/><text x="401" y="931.3" font-size="15.8" fill="#d8d8d8" text-anchor="end">0,33</text><line x1="402.5" y1="963.25" x2="408.5" y2="963.25" stroke="#e0e0e0" stroke-width="1.3"/><text x="401" y="969.25" font-size="15.8" fill="#d8d8d8" text-anchor="end">0,32</text><line x1="402.5" y1="1001.2" x2="408.5" y2="1001.2" stroke="#e0e0e0" stroke-width="1.3"/><text x="401" y="1007.2" font-size="15.8" fill="#d8d8d8" text-anchor="end">0,31</text><line x1="417.5999999999998" y1="1023" x2="417.5999999999998" y2="1029" stroke="#e0e0e0" stroke-width="1.3"/><text x="417.5999999999998" y="1046.7" font-size="15.8" fill="#d8d8d8" text-anchor="middle">0,29</text><line x1="470.1999999999999" y1="1023" x2="470.1999999999999" y2="1029" stroke="#e0e0e0" stroke-width="1.3"/><text x="470.1999999999999" y="1046.7" font-size="15.8" fill="#d8d8d8" text-anchor="middle">0,3</text><line x1="522.8" y1="1023" x2="522.8" y2="1029" stroke="#e0e0e0" stroke-width="1.3"/><text x="522.8" y="1046.7" font-size="15.8" fill="#d8d8d8" text-anchor="middle">0,31</text><line x1="575.4" y1="1023" x2="575.4" y2="1029" stroke="#e0e0e0" stroke-width="1.3"/><text x="575.4" y="1046.7" font-size="15.8" fill="#d8d8d8" text-anchor="middle">0,32</text><line x1="628.0" y1="1023" x2="628.0" y2="1029" stroke="#e0e0e0" stroke-width="1.3"/><text x="628.0" y="1046.7" font-size="15.8" fill="#d8d8d8" text-anchor="middle">0,33</text><g clip-path="url(#cieclip)"><path d="M442.4,1021.7 C456.1,1011.4 489.1,985.7 512,969 C534.9,952.3 554.0,938.7 580,921.5 C606.0,904.3 649.9,877.2 668.2,865.7" fill="none" stroke="#000" stroke-width="2.6"/></g><rect x="531.5" y="921.5" width="14.5" height="14.5" fill="#fff" stroke="#000" stroke-width="2"/><circle cx="515.5" cy="946" r="4.8" fill="#111" stroke="#000" stroke-width="1"/><circle cx="514.5" cy="952" r="4.8" fill="#444" stroke="#000" stroke-width="1"/><circle cx="513" cy="949" r="4.8" fill="#777" stroke="#000" stroke-width="1"/><circle cx="511" cy="951.5" r="4.8" fill="#999" stroke="#000" stroke-width="1"/><circle cx="514.8" cy="955.8" r="4.8" fill="#222" stroke="#000" stroke-width="1"/><circle cx="509" cy="954" r="4.8" fill="#bbb" stroke="#000" stroke-width="1"/><circle cx="506.5" cy="956.7" r="4.8" fill="#fff" stroke="#000" stroke-width="1"/><rect x="689.2" y="810" width="1077.6" height="15" fill="#2d2d2d"/><rect x="689.2" y="825" width="1077.6" height="16" fill="#151515"/><rect x="689.2" y="810" width="15.3" height="31" fill="#000"/><rect x="704.5" y="841.0" width="1062.3" height="28.55" fill="#434343"/><rect x="689.2" y="841.0" width="15.3" height="28.55" fill="url(#rhg)"/><text x="709" y="861.0" font-size="17.5" fill="#f2f2f2" textLength="59" lengthAdjust="spacingAndGlyphs">x: CIE31</text><text x="851.5" y="861.0" font-size="17.2" fill="#f2f2f2">0,266</text><text x="953.0" y="861.0" font-size="17.2" fill="#f2f2f2">0,308</text><text x="1034.9" y="861.0" font-size="17.2" fill="#f2f2f2">0,309</text><text x="1116.8" y="861.0" font-size="17.2" fill="#f2f2f2">0,308</text><text x="1198.7" y="861.0" font-size="17.2" fill="#f2f2f2">0,308</text><text x="1280.6" y="861.0" font-size="17.2" fill="#f2f2f2">0,307</text><text x="1362.5" y="861.0" font-size="17.2" fill="#f2f2f2">0,308</text><text x="1444.4" y="861.0" font-size="17.2" fill="#f2f2f2">0,307</text><text x="1526.3000000000002" y="861.0" font-size="17.2" fill="#f2f2f2">0,307</text><text x="1608.2" y="861.0" font-size="17.2" fill="#f2f2f2">0,307</text><text x="1690.1" y="861.0" font-size="17.2" fill="#f2f2f2">0,307</text><rect x="704.5" y="869.25" width="1062.3" height="28.55" fill="#7e7e7e"/><rect x="689.2" y="869.25" width="15.3" height="28.55" fill="url(#rhg)"/><text x="709" y="889.25" font-size="17.5" fill="#f0f0f0" textLength="59" lengthAdjust="spacingAndGlyphs">y: CIE31</text><text x="851.5" y="889.25" font-size="17.2" fill="#f0f0f0">0,235</text><text x="953.0" y="889.25" font-size="17.2" fill="#f0f0f0">0,322</text><text x="1034.9" y="889.25" font-size="17.2" fill="#f0f0f0">0,324</text><text x="1116.8" y="889.25" font-size="17.2" fill="#f0f0f0">0,324</text><text x="1198.7" y="889.25" font-size="17.2" fill="#f0f0f0">0,324</text><text x="1280.6" y="889.25" font-size="17.2" fill="#f0f0f0">0,323</text><text x="1362.5" y="889.25" font-size="17.2" fill="#f0f0f0">0,323</text><text x="1444.4" y="889.25" font-size="17.2" fill="#f0f0f0">0,322</text><text x="1526.3000000000002" y="889.25" font-size="17.2" fill="#f0f0f0">0,322</text><text x="1608.2" y="889.25" font-size="17.2" fill="#f0f0f0">0,322</text><text x="1690.1" y="889.25" font-size="17.2" fill="#f0f0f0">0,321</text><rect x="704.5" y="897.5" width="1062.3" height="28.55" fill="#434343"/><rect x="689.2" y="897.5" width="15.3" height="28.55" fill="url(#rhg)"/><text x="709" y="917.5" font-size="17.5" fill="#f2f2f2">Y</text><text x="851.5" y="917.5" font-size="17.2" fill="#f2f2f2">0,543</text><text x="953.0" y="917.5" font-size="17.2" fill="#f2f2f2">3,260</text><text x="1034.9" y="917.5" font-size="17.2" fill="#f2f2f2">14,404</text><text x="1116.8" y="917.5" font-size="17.2" fill="#f2f2f2">34,151</text><text x="1198.7" y="917.5" font-size="17.2" fill="#f2f2f2">65,722</text><text x="1280.6" y="917.5" font-size="17.2" fill="#f2f2f2">108,630</text><text x="1362.5" y="917.5" font-size="17.2" fill="#f2f2f2">161,905</text><text x="1444.4" y="917.5" font-size="17.2" fill="#f2f2f2">222,379</text><text x="1526.3000000000002" y="917.5" font-size="17.2" fill="#f2f2f2">300,691</text><text x="1608.2" y="917.5" font-size="17.2" fill="#f2f2f2">392,461</text><text x="1690.1" y="917.5" font-size="17.2" fill="#f2f2f2">495,330</text><rect x="704.5" y="925.75" width="1062.3" height="28.55" fill="#7e7e7e"/><rect x="689.2" y="925.75" width="15.3" height="28.55" fill="url(#rhg)"/><text x="709" y="945.75" font-size="17.5" fill="#f0f0f0" textLength="63" lengthAdjust="spacingAndGlyphs">Target Y</text><text x="851.5" y="945.75" font-size="17.2" fill="#f0f0f0">0,000</text><text x="953.0" y="945.75" font-size="17.2" fill="#f0f0f0">5,117</text><text x="1034.9" y="945.75" font-size="17.2" fill="#f0f0f0">16,398</text><text x="1116.8" y="945.75" font-size="17.2" fill="#f0f0f0">35,798</text><text x="1198.7" y="945.75" font-size="17.2" fill="#f0f0f0">65,814</text><text x="1280.6" y="945.75" font-size="17.2" fill="#f0f0f0">106,922</text><text x="1362.5" y="945.75" font-size="17.2" fill="#f0f0f0">157,786</text><text x="1444.4" y="945.75" font-size="17.2" fill="#f0f0f0">220,522</text><text x="1526.3000000000002" y="945.75" font-size="17.2" fill="#f0f0f0">299,094</text><text x="1608.2" y="945.75" font-size="17.2" fill="#f0f0f0">391,954</text><text x="1690.1" y="945.75" font-size="17.2" fill="#f0f0f0">495,330</text><rect x="704.5" y="954.0" width="1062.3" height="28.55" fill="#434343"/><rect x="689.2" y="954.0" width="15.3" height="28.55" fill="url(#rhg)"/><text x="709" y="974.0" font-size="17.5" fill="#f2f2f2" textLength="131" lengthAdjust="spacingAndGlyphs">Gamma Log/Log</text><text x="851.5" y="974.0" font-size="17.2" fill="#f2f2f2">1,278</text><text x="953.0" y="974.0" font-size="17.2" fill="#f2f2f2">2,200</text><text x="1034.9" y="974.0" font-size="17.2" fill="#f2f2f2">2,198</text><text x="1116.8" y="974.0" font-size="17.2" fill="#f2f2f2">2,209</text><text x="1198.7" y="974.0" font-size="17.2" fill="#f2f2f2">2,204</text><text x="1280.6" y="974.0" font-size="17.2" fill="#f2f2f2">2,201</text><text x="1362.5" y="974.0" font-size="17.2" fill="#f2f2f2">2,189</text><text x="1444.4" y="974.0" font-size="17.2" fill="#f2f2f2">2,228</text><text x="1526.3000000000002" y="974.0" font-size="17.2" fill="#f2f2f2">2,237</text><text x="1608.2" y="974.0" font-size="17.2" fill="#f2f2f2">2,256</text><text x="1690.1" y="974.0" font-size="17.2" fill="#f2f2f2">2,275</text><rect x="704.5" y="982.25" width="1062.3" height="28.55" fill="#7e7e7e"/><rect x="689.2" y="982.25" width="15.3" height="28.55" fill="url(#rhg)"/><text x="709" y="1002.25" font-size="17.5" fill="#f0f0f0" textLength="30" lengthAdjust="spacingAndGlyphs">CCT</text><text x="851.5" y="1002.25" font-size="17.2" fill="#f0f0f0">21924,000</text><text x="953.0" y="1002.25" font-size="17.2" fill="#f0f0f0">6839,000</text><text x="1034.9" y="1002.25" font-size="17.2" fill="#f0f0f0">6784,000</text><text x="1116.8" y="1002.25" font-size="17.2" fill="#f0f0f0">6794,000</text><text x="1198.7" y="1002.25" font-size="17.2" fill="#f0f0f0">6808,000</text><text x="1280.6" y="1002.25" font-size="17.2" fill="#f0f0f0">6871,000</text><text x="1362.5" y="1002.25" font-size="17.2" fill="#f0f0f0">6848,000</text><text x="1444.4" y="1002.25" font-size="17.2" fill="#f0f0f0">6883,000</text><text x="1526.3000000000002" y="1002.25" font-size="17.2" fill="#f0f0f0">6885,000</text><text x="1608.2" y="1002.25" font-size="17.2" fill="#f0f0f0">6883,000</text><text x="1690.1" y="1002.25" font-size="17.2" fill="#f0f0f0">6921,000</text><rect x="704.5" y="1010.5" width="1062.3" height="28.55" fill="#434343"/><rect x="689.2" y="1010.5" width="15.3" height="28.55" fill="url(#rhg)"/><text x="709" y="1030.5" font-size="17.5" fill="#f2f2f2" textLength="63.5" lengthAdjust="spacingAndGlyphs">ΔE 2000</text><text x="851.5" y="1030.5" font-size="17.2" fill="#f2f2f2">2,016</text><text x="953.0" y="1030.5" font-size="17.2" fill="#f2f2f2">2,129</text><text x="1034.9" y="1030.5" font-size="17.2" fill="#f2f2f2">1,376</text><text x="1116.8" y="1030.5" font-size="17.2" fill="#f2f2f2">1,235</text><text x="1198.7" y="1030.5" font-size="17.2" fill="#f2f2f2">1,438</text><text x="1280.6" y="1030.5" font-size="17.2" fill="#f2f2f2">2,033</text><text x="1362.5" y="1030.5" font-size="17.2" fill="#f2f2f2">2,189</text><text x="1444.4" y="1030.5" font-size="17.2" fill="#f2f2f2">2,627</text><text x="1526.3000000000002" y="1030.5" font-size="17.2" fill="#f2f2f2">2,949</text><text x="1608.2" y="1030.5" font-size="17.2" fill="#f2f2f2">3,208</text><text x="1690.1" y="1030.5" font-size="17.2" fill="#f2f2f2">3,918</text><text x="851.5" y="831.6" font-size="16.5" fill="#f5f5f5" stroke="#f5f5f5" stroke-width="0.35">0</text><text x="953.0" y="831.6" font-size="16.5" fill="#f5f5f5" stroke="#f5f5f5" stroke-width="0.35">10</text><text x="1034.9" y="831.6" font-size="16.5" fill="#f5f5f5" stroke="#f5f5f5" stroke-width="0.35">20</text><text x="1116.8" y="831.6" font-size="16.5" fill="#f5f5f5" stroke="#f5f5f5" stroke-width="0.35">30</text><text x="1198.7" y="831.6" font-size="16.5" fill="#f5f5f5" stroke="#f5f5f5" stroke-width="0.35">40</text><text x="1280.6" y="831.6" font-size="16.5" fill="#f5f5f5" stroke="#f5f5f5" stroke-width="0.35">50</text><text x="1362.5" y="831.6" font-size="16.5" fill="#f5f5f5" stroke="#f5f5f5" stroke-width="0.35">60</text><text x="1444.4" y="831.6" font-size="16.5" fill="#f5f5f5" stroke="#f5f5f5" stroke-width="0.35">70</text><text x="1526.3000000000002" y="831.6" font-size="16.5" fill="#f5f5f5" stroke="#f5f5f5" stroke-width="0.35">80</text><text x="1608.2" y="831.6" font-size="16.5" fill="#f5f5f5" stroke="#f5f5f5" stroke-width="0.35">90</text><text x="1690.1" y="831.6" font-size="16.5" fill="#f5f5f5" stroke="#f5f5f5" stroke-width="0.35">100</text><rect x="0" y="1146" width="1831" height="54" fill="url(#barbg)"/><rect x="2.0" y="1146" width="128" height="53" rx="3.5" fill="url(#bbtn)"/><rect x="6.0" y="1150" width="120" height="31" rx="3" fill="rgb(0,0,0)" stroke="rgba(0,0,0,0.25)" stroke-width="1"/><text x="66.0" y="1193.5" font-size="9.5" fill="#2a2a2a" text-anchor="middle">0</text><rect x="132.5" y="1146" width="128" height="53" rx="3.5" fill="url(#bbtn)"/><rect x="136.5" y="1150" width="120" height="31" rx="3" fill="rgb(26,26,26)" stroke="rgba(0,0,0,0.25)" stroke-width="1"/><text x="196.5" y="1193.5" font-size="9.5" fill="#2a2a2a" text-anchor="middle">10</text><rect x="263.0" y="1146" width="128" height="53" rx="3.5" fill="url(#bbtn)"/><rect x="267.0" y="1150" width="120" height="31" rx="3" fill="rgb(51,51,51)" stroke="rgba(0,0,0,0.25)" stroke-width="1"/><text x="327.0" y="1193.5" font-size="9.5" fill="#2a2a2a" text-anchor="middle">20</text><rect x="393.5" y="1146" width="128" height="53" rx="3.5" fill="url(#bbtn)"/><rect x="397.5" y="1150" width="120" height="31" rx="3" fill="rgb(77,77,77)" stroke="rgba(0,0,0,0.25)" stroke-width="1"/><text x="457.5" y="1193.5" font-size="9.5" fill="#2a2a2a" text-anchor="middle">30</text><rect x="524.0" y="1146" width="128" height="53" rx="3.5" fill="url(#bbtn)"/><rect x="528.0" y="1150" width="120" height="31" rx="3" fill="rgb(102,102,102)" stroke="rgba(0,0,0,0.25)" stroke-width="1"/><text x="588.0" y="1193.5" font-size="9.5" fill="#2a2a2a" text-anchor="middle">40</text><rect x="654.5" y="1146" width="128" height="53" rx="3.5" fill="url(#bbtn)"/><rect x="658.5" y="1150" width="120" height="31" rx="3" fill="rgb(128,128,128)" stroke="rgba(0,0,0,0.25)" stroke-width="1"/><text x="718.5" y="1193.5" font-size="9.5" fill="#2a2a2a" text-anchor="middle">50</text><rect x="785.0" y="1146" width="128" height="53" rx="3.5" fill="url(#bbtn)"/><rect x="789.0" y="1150" width="120" height="31" rx="3" fill="rgb(153,153,153)" stroke="rgba(0,0,0,0.25)" stroke-width="1"/><text x="849.0" y="1193.5" font-size="9.5" fill="#2a2a2a" text-anchor="middle">60</text><rect x="915.5" y="1146" width="128" height="53" rx="3.5" fill="url(#bbtn)"/><rect x="919.5" y="1150" width="120" height="31" rx="3" fill="rgb(179,179,179)" stroke="rgba(0,0,0,0.25)" stroke-width="1"/><text x="979.5" y="1193.5" font-size="9.5" fill="#2a2a2a" text-anchor="middle">70</text><rect x="1046.0" y="1146" width="128" height="53" rx="3.5" fill="url(#bbtn)"/><rect x="1050.0" y="1150" width="120" height="31" rx="3" fill="rgb(204,204,204)" stroke="rgba(0,0,0,0.25)" stroke-width="1"/><text x="1110.0" y="1193.5" font-size="9.5" fill="#2a2a2a" text-anchor="middle">80</text><rect x="1176.5" y="1146" width="128" height="53" rx="3.5" fill="url(#bbtn)"/><rect x="1180.5" y="1150" width="120" height="31" rx="3" fill="rgb(230,230,230)" stroke="rgba(0,0,0,0.25)" stroke-width="1"/><text x="1240.5" y="1193.5" font-size="9.5" fill="#2a2a2a" text-anchor="middle">90</text><rect x="1304.7" y="1146" width="128" height="53" rx="3.5" fill="url(#selg)"/><rect x="1308.9" y="1149.7" width="120" height="31.3" rx="3" fill="#ffffff"/><text x="1369" y="1194" font-size="9.8" fill="#ffffff" text-anchor="middle" font-weight="bold">100</text><rect x="1553" y="1146" width="41" height="53" rx="3" fill="url(#ctl2)"/><line x1="1553" y1="1161.5" x2="1594" y2="1161.5" stroke="#6a6a6a" stroke-width="1.2"/><circle cx="1573.5" cy="1153.5" r="5.5" fill="url(#cbtn)"/><path d="M1570.5,1155.5 L1573.5,1151.5 L1576.5,1155.5 Z" fill="#222"/><rect x="1561" y="1167" width="25" height="25" rx="3" fill="#c8c8c8" stroke="#222" stroke-width="2"/><rect x="1568" y="1174" width="11" height="11" fill="#000"/><rect x="1595.3" y="1146" width="39.30000000000014" height="25" rx="2" fill="url(#ctl)"/><circle cx="1615.35" cy="1158.5" r="8.5" fill="url(#cbtn)"/><rect x="1635.4" y="1146" width="36.99999999999996" height="25" rx="2" fill="url(#ctl)"/><circle cx="1654.3000000000002" cy="1158.5" r="8.5" fill="url(#cbtn)"/><rect x="1673.2" y="1146" width="37.99999999999996" height="25" rx="2" fill="url(#ctl)"/><circle cx="1692.6" cy="1158.5" r="8.5" fill="url(#cbtn)"/><rect x="1712" y="1146" width="37.79999999999991" height="25" rx="2" fill="url(#ctl)"/><circle cx="1731.3" cy="1158.5" r="8.5" fill="url(#cbtn)"/><rect x="1750.6" y="1146" width="37.30000000000014" height="25" rx="2" fill="url(#ctl)"/><circle cx="1769.65" cy="1158.5" r="8.5" fill="url(#cbtn)"/><g transform="translate(1615.35,1158.5)"><rect x="-3.5" y="-3.5" width="7" height="7" fill="#222"/></g><g transform="translate(1654.3000000000002,1158.5)"><path d="M-3,-5 L5,0 L-3,5 Z" fill="#222"/></g><g transform="translate(1692.6,1158.5)"><path d="M-3,-4.5 H-5 V4.5 H-3 M3,-4.5 H5 V4.5 H3" fill="none" stroke="#222" stroke-width="1.6"/><circle cx="-1.2" cy="0" r="0.9" fill="#222"/><circle cx="1.2" cy="0" r="0.9" fill="#222"/></g><g transform="translate(1731.3,1158.5)"><path d="M0,0 C-2,-3.5 -6,-3.5 -6,0 C-6,3.5 -2,3.5 0,0 C2,-3.5 6,-3.5 6,0 C6,3.5 2,3.5 0,0 Z" fill="none" stroke="#222" stroke-width="1.8"/></g><g transform="translate(1769.65,1158.5)"><path d="M-5,-1 A5,5 0 0 1 4,-3 M5,1 A5,5 0 0 1 -4,3" fill="none" stroke="#222" stroke-width="1.8"/><path d="M2,-6 L5.5,-2.5 L1,-1.5 Z M-2,6 L-5.5,2.5 L-1,1.5 Z" fill="#222"/></g><rect x="1788.7" y="1146" width="41" height="25" fill="#2a2a2a"/><circle cx="1809" cy="1158.5" r="9" fill="#222"/><rect x="1595.3" y="1172.6" width="116" height="26.4" rx="2.5" fill="url(#ctl)"/><rect x="1712.4" y="1172.6" width="116.5" height="26.4" rx="2.5" fill="url(#ctl)"/><circle cx="1621.8" cy="1185.6" r="8" fill="url(#cbtn)"/><circle cx="1804.6" cy="1185.6" r="8" fill="url(#cbtn)"/><path d="M1622,1181.5 L1618.5,1185.6 L1622,1189.7 M1625.5,1181.5 L1622,1185.6 L1625.5,1189.7" fill="none" stroke="#222" stroke-width="1.5"/><path d="M1801,1181.5 L1804.5,1185.6 L1801,1189.7 M1804.5,1181.5 L1808,1185.6 L1804.5,1189.7" fill="none" stroke="#222" stroke-width="1.5"/><text x="1645" y="1192.3" font-size="18.5" fill="#262626" textLength="43" lengthAdjust="spacingAndGlyphs" stroke="#262626" stroke-width="0.55">Back</text><text x="1736.3" y="1192.3" font-size="18.5" fill="#262626" textLength="44" lengthAdjust="spacingAndGlyphs" stroke="#262626" stroke-width="0.55">Next</text><rect x="0" y="0" width="1831" height="1" fill="#1f5f86"/><rect x="0" y="0" width="1" height="1200" fill="#1f5f86"/><rect x="1830" y="0" width="1" height="1200" fill="#1f5f86"/><rect x="0" y="1199" width="1831" height="1" fill="#1f5f86"/></svg></body></html>
